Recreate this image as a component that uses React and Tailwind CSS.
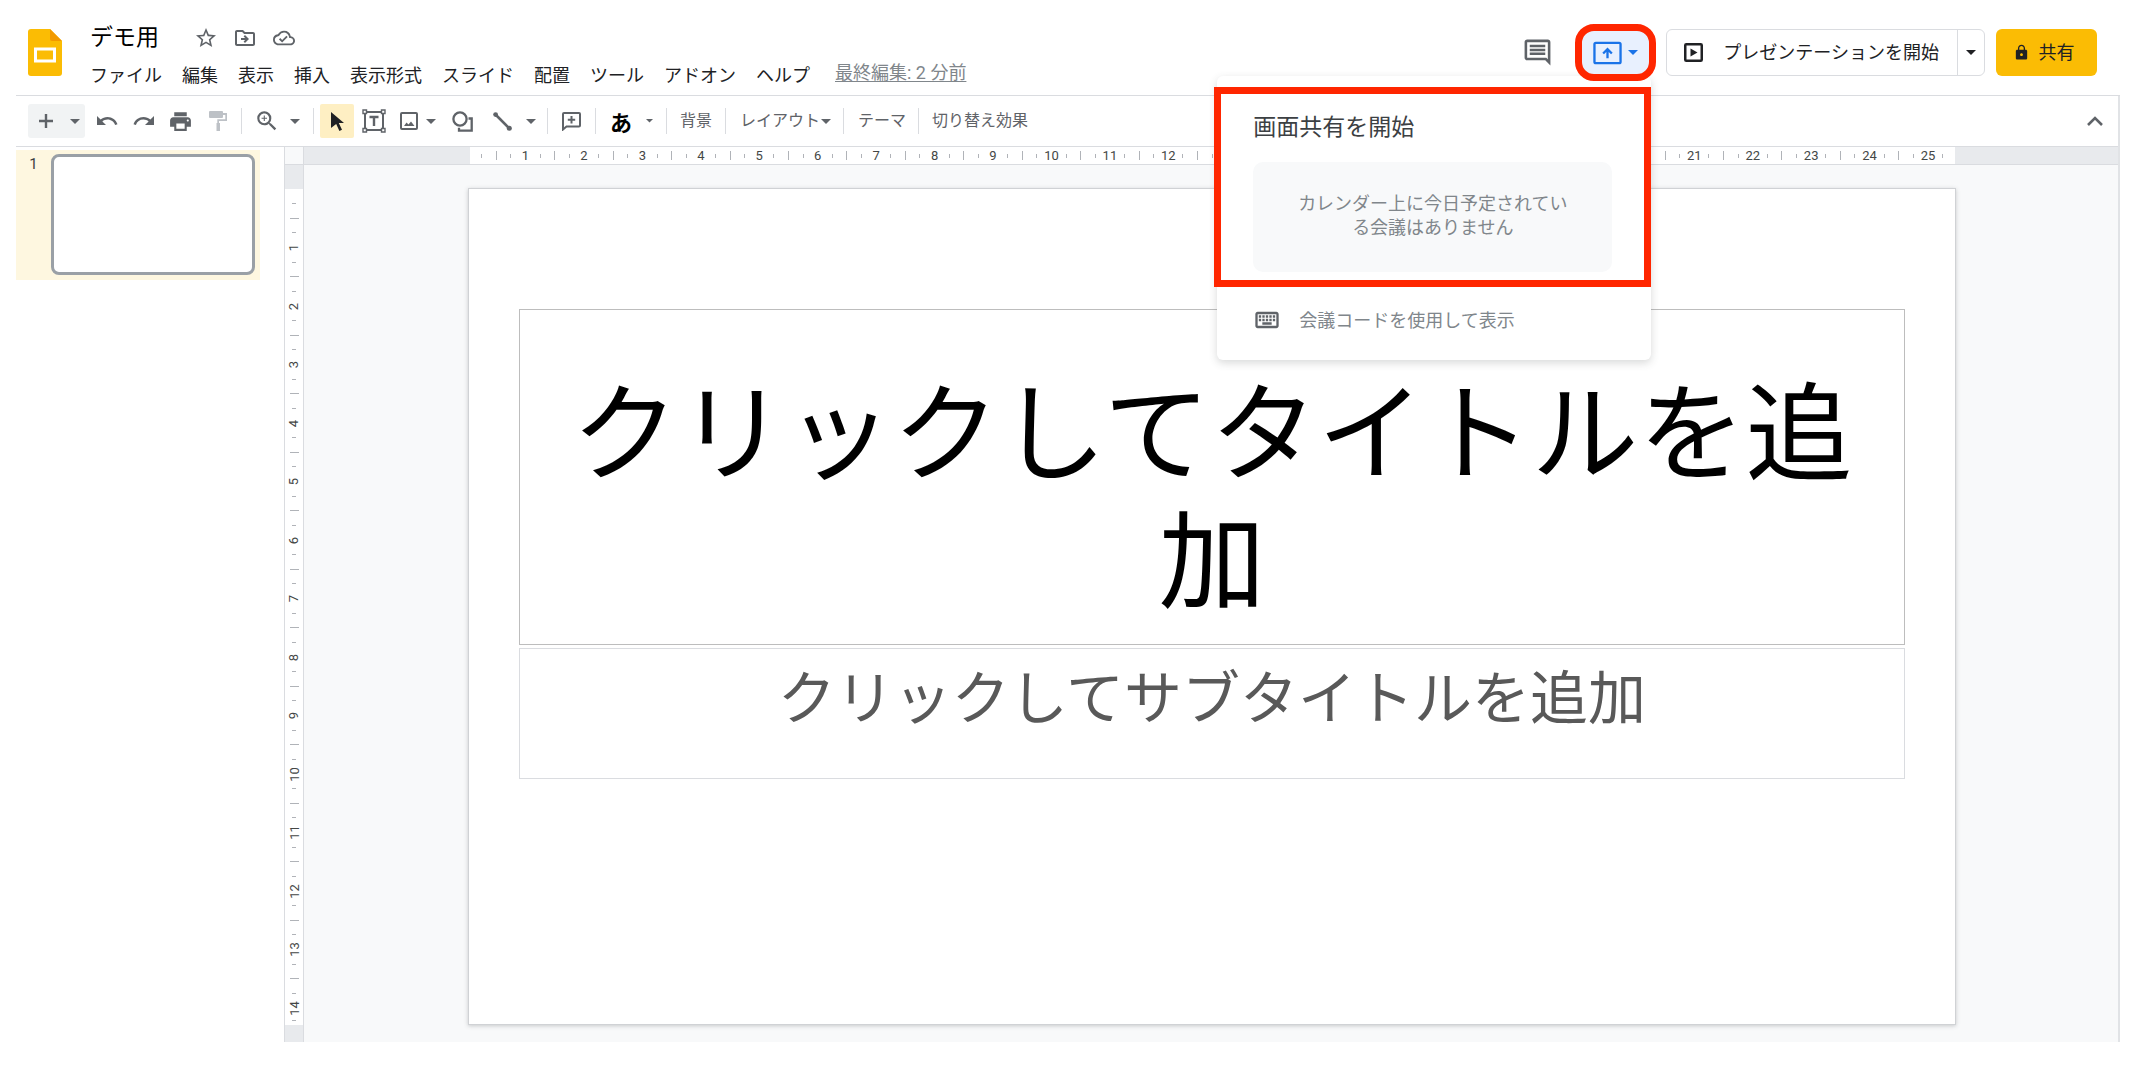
import React from "react";
import {
  MdStarOutline,
  MdOutlineDriveFileMove,
  MdOutlineCloudDone,
  MdOutlineInsertComment,
  MdUndo,
  MdRedo,
  MdPrint,
  MdZoomIn,
  MdLock,
  MdOutlineKeyboard,
} from "react-icons/md";

const MENUS = ["ファイル", "編集", "表示", "挿入", "表示形式", "スライド", "配置", "ツール", "アドオン", "ヘルプ"];

function Caret({ className = "w-[10px]" }) {
  return (
    <svg viewBox="0 0 10 5" className={className} fill="currentColor" aria-hidden="true">
      <path d="M0 0h10L5 5z" />
    </svg>
  );
}

function Tool({ label, className, children }) {
  return (
    <button type="button" aria-label={label} className={`flex h-[34px] shrink-0 items-center justify-center ${className}`}>
      {children}
    </button>
  );
}

function Separator({ className }) {
  return <span className={`h-[26px] w-px shrink-0 bg-[#dadce0] ${className}`} />;
}

function SlidesLogo() {
  return (
    <svg viewBox="0 0 34 47" className="h-[47px] w-[34px]" aria-hidden="true">
      <path d="M3 0h19l12 12v32a3 3 0 0 1-3 3H3a3 3 0 0 1-3-3V3a3 3 0 0 1 3-3z" fill="#fbbc04" />
      <path d="M22 0l12 12h-10a2 2 0 0 1-2-2z" fill="#f29900" />
      <path d="M6 18.500h22v15H6zM9 21.500v9h16v-9z" fill="#fff" fillRule="evenodd" />
    </svg>
  );
}

function Header() {
  return (
    <header className="flex items-start border-b border-[#dadce0] pt-6 pb-[6px] pl-3 pr-[23px]">
      <div className="flex h-[57px] items-center">
        <SlidesLogo />
      </div>
      <div className="ml-[28px]">
        <div className="flex h-7 items-center">
          <h1 className="text-[23px] leading-7 text-black">デモ用</h1>
          <div className="ml-[35px] flex gap-[15px] text-[#5f6368]">
            <button type="button" aria-label="スター"><MdStarOutline size={24} /></button>
            <button type="button" aria-label="移動"><MdOutlineDriveFileMove size={24} /></button>
            <button type="button" aria-label="保存状況"><MdOutlineCloudDone size={22} className="mx-px" /></button>
          </div>
        </div>
        <nav className="mt-[10px] flex h-[27px] items-center text-[18px] leading-6 text-[#202124]">
          <div className="flex gap-5">
            {MENUS.map((m) => (
              <button type="button" key={m} className="whitespace-nowrap">{m}</button>
            ))}
          </div>
          <a href="#history" className="mb-[6px] ml-[25px] whitespace-nowrap text-[#80868b] underline underline-offset-2">
            最終編集: 2 分前
          </a>
        </nav>
      </div>
      <div className="ml-auto flex h-[57px] items-center">
        <button type="button" aria-label="コメント" className="mr-[22px] text-[#5f6368]">
          <MdOutlineInsertComment size={31} />
        </button>
        <div className="relative">
          <button
            type="button"
            aria-label="会議で画面を共有"
            aria-expanded="true"
            className="relative z-30 flex h-[57px] w-[81px] items-center justify-center gap-[6px] rounded-[19px] border-[7px] border-[#ff2600] bg-[#e8f0fe] text-[#1a73e8]"
          >
            <svg viewBox="0 0 30 24" className="h-6 w-[29px]" fill="none" stroke="currentColor" strokeWidth="2.4" aria-hidden="true">
              <rect x="1.5" y="1.5" width="27" height="21" rx="1.5" />
              <path d="M15 17.500V8.500M10.500 12.500L15 8L19.500 12.500" />
            </svg>
            <Caret />
          </button>
          <MeetingMenu />
        </div>
        <div className="ml-[10px] flex h-[47px] rounded-[6px] border border-[#dadce0] text-[#202124]">
          <button type="button" className="flex items-center pl-[17px] pr-[18px] text-[18px]">
            <svg viewBox="0 0 19 19" className="mr-5 h-[19px] w-[19px]" aria-hidden="true">
              <rect x="1.250" y="1.250" width="16.500" height="16.500" rx="1" fill="none" stroke="currentColor" strokeWidth="2.500" />
              <path d="M6.500 5.500v8L13.500 9.500z" fill="currentColor" />
            </svg>
            <span className="whitespace-nowrap">プレゼンテーションを開始</span>
          </button>
          <button type="button" aria-label="その他の開始方法" className="flex w-[27px] items-center justify-center border-l border-[#dadce0]">
            <Caret />
          </button>
        </div>
        <button type="button" className="ml-[11px] flex h-[47px] w-[101px] items-center justify-center gap-[9px] rounded-[6px] bg-[#fbbc04] pr-[6px] text-[18px] text-[#202124]">
          <MdLock size={17} />
          共有
        </button>
      </div>
    </header>
  );
}

function MeetingMenu() {
  return (
    <div className="absolute top-[52px] right-[5px] z-20 w-[434px] rounded-[6px] bg-white pt-[11px] shadow-[0_3px_8px_rgba(60,64,67,0.2)]">
      <section className="-ml-[3px] border-[7px] border-[#ff2600] px-[32px] pt-[18px] pb-[8px]">
        <h2 className="text-[23px] leading-8 text-[#3c4043]">画面共有を開始</h2>
        <p className="mt-[18px] rounded-[10px] bg-[#f8f9fa] px-[30px] pt-[30px] pb-[32px] text-center text-[18px] leading-6 text-[#80868b]">
          カレンダー上に今日予定されてい
          <br />
          る会議はありません
        </p>
      </section>
      <button type="button" className="flex h-[73px] items-center pb-[7px] pl-[36px] text-[18px] text-[#80868b]">
        <MdOutlineKeyboard size={28} className="mr-[18px] text-[#5f6368]" />
        会議コードを使用して表示
      </button>
    </div>
  );
}

function Toolbar() {
  return (
    <div role="toolbar" className="flex h-[51px] items-center border-b border-[#dadce0] pl-3 text-[16px] text-[#5f6368]">
      <div className="flex rounded-[3px] bg-[#f1f3f4]">
        <Tool label="新しいスライド" className="w-9">
          <svg viewBox="0 0 14 14" className="w-[14px]" stroke="currentColor" strokeWidth="2.4" aria-hidden="true">
            <path d="M7 0v14M0 7h14" />
          </svg>
        </Tool>
        <Tool label="レイアウト付きの新しいスライド" className="w-[21px]"><Caret /></Tool>
      </div>
      <Tool label="元に戻す" className="ml-[3px] w-[37px]"><MdUndo size={24} /></Tool>
      <Tool label="やり直し" className="w-[37px]"><MdRedo size={24} /></Tool>
      <Tool label="印刷" className="w-[37px]"><MdPrint size={25} /></Tool>
      <Tool label="書式を貼り付け" className="w-[37px] text-[#bdc1c6]">
        <svg viewBox="0 0 18 20" className="w-[18px]" fill="currentColor" aria-hidden="true">
          <path d="M1 0h12a1 1 0 0 1 1 1v1h4v8h-8v2h1v8H7.500v-8h.8V8.200h8V4H14v2a1 1 0 0 1-1 1H1a1 1 0 0 1-1-1V1a1 1 0 0 1 1-1z" />
        </svg>
      </Tool>
      <Separator className="ml-[5px] mr-[6px]" />
      <Tool label="ズーム" className="w-[37px]"><MdZoomIn size={26} /></Tool>
      <Tool label="ズームの倍率" className="w-5"><Caret /></Tool>
      <Separator className="ml-2 mr-[6px]" />
      <Tool label="選択" className="w-[34px] rounded-[2px] bg-[#feefc3] text-[#202124]">
        <svg viewBox="0 0 13 19" className="w-[13px]" fill="currentColor" aria-hidden="true">
          <path d="M0 0l13 11H7.800l3.200 6.800-2.600 1.200-3.200-7L0 16z" />
        </svg>
      </Tool>
      <Tool label="テキスト ボックス" className="w-10">
        <svg viewBox="0 0 24 24" className="w-6" fill="none" stroke="currentColor" strokeWidth="2" aria-hidden="true">
          <path d="M3 3h18v18H3z" />
          <path d="M7.500 8h9M12 8v9" strokeWidth="2.400" />
          <g fill="#fff" strokeWidth="1.400">
            <path d="M1 1h3.500v3.500H1zM19.500 1H23v3.500h-3.500zM1 19.500h3.500V23H1zM19.500 19.500H23V23h-3.500z" />
          </g>
        </svg>
      </Tool>
      <Tool label="画像" className="w-[30px]">
        <svg viewBox="0 0 18 18" className="w-[18px]" fill="none" stroke="currentColor" strokeWidth="2" aria-hidden="true">
          <rect x="1" y="1" width="16" height="16" rx="1" />
          <path d="M4 14l2.500-3.500 2 2L11 9.500l3.500 4.500z" fill="currentColor" stroke="none" />
        </svg>
      </Tool>
      <Tool label="画像のオプション" className="w-[14px]"><Caret /></Tool>
      <Tool label="図形" className="w-12">
        <svg viewBox="0 0 21 21" className="w-[21px]" fill="none" stroke="currentColor" strokeWidth="2.300" aria-hidden="true">
          <circle cx="8" cy="8" r="6.600" />
          <path d="M16.500 7.500h3.200v12.200H7v-3" />
        </svg>
      </Tool>
      <Tool label="線" className="w-8">
        <svg viewBox="0 0 19 19" className="w-[19px]" aria-hidden="true">
          <path d="M2.500 2.500l14 14" stroke="currentColor" strokeWidth="2.600" />
          <circle cx="2.600" cy="2.600" r="2.400" fill="currentColor" />
          <circle cx="16.300" cy="16.300" r="2.500" fill="currentColor" />
        </svg>
      </Tool>
      <Tool label="線のオプション" className="w-[25px]"><Caret /></Tool>
      <Separator className="ml-[4px]" />
      <Tool label="コメントを追加" className="w-[46px]">
        <svg viewBox="0 0 19 19" className="w-[19px]" fill="none" stroke="currentColor" strokeWidth="2" aria-hidden="true">
          <path d="M1 17.500V2a1 1 0 0 1 1-1h15a1 1 0 0 1 1 1v11.500a1 1 0 0 1-1 1H4.500z" />
          <path d="M9.500 4v7.500M5.800 7.700h7.400" />
        </svg>
      </Tool>
      <Separator className="ml-px" />
      <Tool label="入力ツール" className="w-[50px] pt-1 text-[22px] font-bold text-black">あ</Tool>
      <Tool label="入力ツールのオプション" className="w-[7px]"><Caret className="w-[7px]" /></Tool>
      <Separator className="ml-[13px] mr-[13px]" />
      <button type="button" className="whitespace-nowrap">背景</button>
      <Separator className="ml-[13px] mr-[14px]" />
      <button type="button" className="flex items-center gap-px whitespace-nowrap">レイアウト<Caret /></button>
      <Separator className="ml-3 mr-[14px]" />
      <button type="button" className="whitespace-nowrap">テーマ</button>
      <Separator className="ml-3 mr-[13px]" />
      <button type="button" className="whitespace-nowrap">切り替え効果</button>
      <Tool label="メニューを非表示" className="mr-[7px] ml-auto w-8">
        <svg viewBox="0 0 16 10" className="w-4" fill="none" stroke="currentColor" strokeWidth="2.600" aria-hidden="true">
          <path d="M1 9l7-7 7 7" />
        </svg>
      </Tool>
    </div>
  );
}

function Filmstrip() {
  return (
    <aside className="w-[268px] shrink-0 pt-[3px]">
      <button type="button" aria-label="スライド 1" className="flex h-[130px] w-[244px] items-start bg-[#fef7e0] pt-1">
        <span className="w-[35px] pt-[2px] text-center text-[15px] leading-4 text-[#3c4043]">1</span>
        <span className="h-[121px] w-[204px] rounded-[8px] border-[3px] border-[#9aa0a6] bg-white" />
      </button>
    </aside>
  );
}

function HorizontalRuler() {
  const ticks = Array.from({ length: 101 }, (_, i) => i + 1);
  return (
    <div className="flex h-[18px] border-b border-[#dadce0] bg-[#e8eaed] pl-[166px] pr-[163px]">
      <div className="flex min-w-0 flex-1 items-center bg-white text-[13px] leading-none text-[#444746]">
        <span className="min-w-0 grow-[3] basis-0" />
        {ticks.map((k) => (
          <span key={k} className="flex min-w-0 grow-[10] basis-0 items-center justify-center">
            {k % 4 === 0 ? k / 4 : <i className={k % 2 === 0 ? "h-[9px] w-px shrink-0 bg-[#b0b3b8]" : "h-1 w-px shrink-0 bg-[#b0b3b8]"} />}
          </span>
        ))}
        <span className="min-w-0 grow-[3] basis-0" />
      </div>
    </div>
  );
}

function VerticalRuler() {
  const ticks = Array.from({ length: 57 }, (_, i) => i + 1);
  return (
    <div className="flex w-[20px] shrink-0 flex-col border-x border-[#dadce0] bg-[#e8eaed] pb-[17px]">
      <div className="h-[18px] border-b border-[#dadce0] bg-[#f8f9fa]" />
      <div className="mt-6 flex min-h-0 flex-1 flex-col items-center bg-white text-[13px] leading-none text-[#444746]">
        <span className="min-h-0 grow-[50] basis-0" />
        {ticks.map((k) => (
          <span key={k} className={`flex min-h-0 basis-0 items-center justify-center ${k === 57 ? "grow-[65]" : "grow-[100]"}`}>
            {k % 4 === 0 ? (
              <span className="-rotate-90">{k / 4}</span>
            ) : (
              <i className={k % 2 === 0 ? "h-px w-[9px] shrink-0 bg-[#b0b3b8]" : "h-px w-1 shrink-0 bg-[#b0b3b8]"} />
            )}
          </span>
        ))}
      </div>
    </div>
  );
}

function Slide() {
  return (
    <div className="aspect-video border border-[#d0d2d5] bg-white px-[50px] pt-[120px] shadow-[0_1px_4px_rgba(60,64,67,0.25)]">
      <div className="flex h-[336px] items-end justify-center border border-[#bdbdbd] px-5 pb-[16px]">
        <h2 className="text-center text-[107px] leading-[128px] text-black">クリックしてタイトルを追加</h2>
      </div>
      <div className="mt-[3px] h-[131px] border border-[#dadce0] pt-[15px]">
        <p className="text-center text-[58px] leading-[70px] text-[#595959]">クリックしてサブタイトルを追加</p>
      </div>
    </div>
  );
}

export default function App() {
  return (
    <div className="min-h-screen bg-white pl-4 pr-9 font-['Roboto','Noto_Sans_CJK_JP',sans-serif]" lang="ja">
      <Header />
      <div className="border-r-2 border-[#e1e3e6]">
        <Toolbar />
        <main className="flex">
          <Filmstrip />
          <VerticalRuler />
          <div className="min-w-0 flex-1 bg-[#f8f9fa]">
            <HorizontalRuler />
            <div className="pt-[23px] pr-[162px] pb-[17px] pl-[164px]">
              <Slide />
            </div>
          </div>
        </main>
      </div>
    </div>
  );
}
